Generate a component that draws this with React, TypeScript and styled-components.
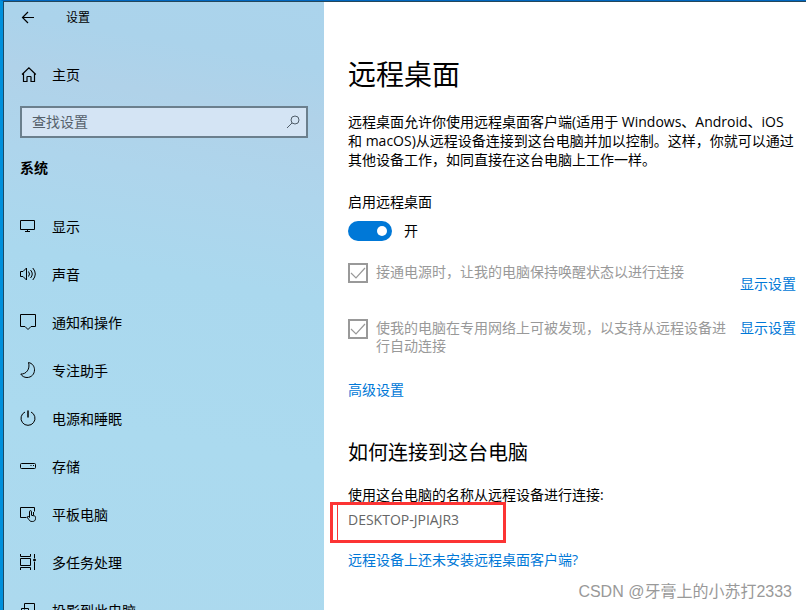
import React from "react";
import styled, { createGlobalStyle } from "styled-components";

const GlobalStyle = createGlobalStyle`
  * { box-sizing: border-box; }
  body {
    margin: 0;
    overflow: hidden;
    background: #fff;
    color: #000;
    font-family: "Open Sans", "Noto Sans CJK SC", sans-serif;
    font-size: 14px;
    line-height: 20px;
  }
  h1, h2, p { margin: 0; font-weight: 400; }
  a { color: #0078d7; text-decoration: none; }
`;

const Window = styled.div`
  display: grid;
  grid-template-columns: 321px 1fr;
  height: 100vh;
  overflow: hidden;
  border-left: 3px solid #0090dc;
  border-top: 1px solid #0067c0;
`;

const Sidebar = styled.aside`
  min-width: 0;
  overflow: hidden;
  padding: 0 16px;
  border-left: 1px solid #1c4a66;
  border-top: 1px solid #24475c;
  background: linear-gradient(190deg, #abd4ec 0%, #abd3eb 10%, #b0d2e9 18%, #aed5ec 30%, #aad8ee 45%, #abdaef 70%, #acd9ee 100%);
`;

const TitleBar = styled.header`
  display: flex;
  align-items: center;
  gap: 28px;
  height: 32px;
  font-size: 12px;
`;

const IconButton = styled.button`
  display: flex;
  padding: 0;
  border: 0;
  background: none;
  color: inherit;
`;

const NavLink = styled.a`
  display: flex;
  align-items: center;
  gap: 14px;
  height: 48px;
  color: #000;
  white-space: nowrap;
`;

const HomeLink = styled(NavLink)`
  margin-top: 17px;
`;

const Search = styled.form`
  display: flex;
  align-items: center;
  height: 32px;
  margin-top: 7px;
  padding: 0 4px 0 10px;
  border: 2px solid #6b7f8d;
  background: #d4e4f4;
  color: #4f5c68;
`;

const SearchInput = styled.input`
  flex: 1;
  min-width: 0;
  padding: 0;
  border: 0;
  outline: 0;
  background: none;
  font: inherit;
  &::placeholder { color: #55606b; opacity: 1; }
`;

const GroupTitle = styled.h2`
  margin: 20px 0 25px;
  font-size: 14px;
  font-weight: 700;
`;

const Icon = styled.svg`
  flex: none;
  width: 18px;
  height: 18px;
  fill: none;
  stroke: currentColor;
  stroke-width: 1;
`;

const Main = styled.main`
  display: flex;
  flex-direction: column;
  align-items: flex-start;
  min-width: 0;
  padding: 54px 10px 0 24px;
  border-top: 1px solid #24475c;
`;

const PageTitle = styled.h1`
  font-size: 28px;
  line-height: 36px;
`;

const Intro = styled.p`
  margin-top: 20px;
  line-height: 19px;
`;

const Label = styled.label`
  margin-top: 23px;
`;

const SwitchRow = styled.div`
  display: flex;
  align-items: center;
  gap: 12px;
  margin-top: 9px;
`;

const Switch = styled.input`
  appearance: none;
  display: flex;
  align-items: center;
  width: 44px;
  height: 20px;
  margin: 0;
  padding: 0 5px;
  border-radius: 10px;
  background: #0078d7;
  &::before {
    content: "";
    width: 10px;
    height: 10px;
    border-radius: 50%;
    background: #fff;
  }
  &:checked { justify-content: flex-end; }
`;

const Options = styled.div`
  align-self: stretch;
  display: grid;
  gap: 26px;
  margin-top: 22px;
`;

const Option = styled.div`
  display: grid;
  grid-template-columns: 20px 1fr 56px;
  column-gap: 8px;
  align-items: start;
`;

const CheckBox = styled.input`
  appearance: none;
  width: 20px;
  height: 20px;
  margin: 0;
  border: 2px solid #999;
  &:checked {
    background: url("data:image/svg+xml,%3Csvg xmlns='http://www.w3.org/2000/svg' viewBox='0 0 16 16'%3E%3Cpath d='M1 8l5 5L15 3' fill='none' stroke='%23999' stroke-width='1.2'/%3E%3C/svg%3E") center / 16px 16px no-repeat;
  }
`;

const OptionLabel = styled.label`
  color: #999;
  line-height: 18px;
`;

const OptionLink = styled.a<{ $low?: boolean }>`
  margin-top: ${(p) => (p.$low ? "12px" : "0")};
  line-height: 18px;
  white-space: nowrap;
`;

const AdvancedLink = styled.a`
  margin-top: 25px;
`;

const SectionTitle = styled.h2`
  margin-top: 39px;
  font-size: 20px;
  line-height: 28px;
`;

const Hint = styled.p`
  margin-top: 18px;
`;

const NameBox = styled.div`
  position: relative;
  margin-top: 5px;
  color: #666;
`;

const Highlight = styled.span`
  position: absolute;
  left: -18px;
  top: -8px;
  width: 176px;
  height: 41px;
  border: 3px solid #fc3434;
  &::before {
    content: "";
    position: absolute;
    left: 4px;
    top: 0;
    bottom: 0;
    border-left: 1px solid #fc3434;
  }
`;

const ClientLink = styled.a`
  margin-top: 20px;
`;

const Watermark = styled.footer`
  align-self: flex-end;
  margin: 12px 4px 0 0;
  color: #999;
  font-family: "Liberation Sans", "Noto Sans CJK SC", sans-serif;
  font-size: 16px;
  white-space: nowrap;
`;

const navItems = [
  { label: "显示", icon: <path d="M.5 3.5h14v9H.5zM7.5 12.5v2M5 14.5h5" /> },
  {
    label: "声音",
    icon: <path d="M.5 6.5H3L6.500 3v12L3 11.500H.5zM8.500 6.500q2 2.500 0 5M10.500 5q3.500 4 0 8M12.800 3q5 6 0 12" />,
  },
  { label: "通知和操作", icon: <path d="M.5 1.5h15v12H11l-3 3-3-3H.5z" /> },
  {
    label: "专注助手",
    icon: <path d="M8.5 1.500c4 .8 6 4 6 7.300 0 4.500-3.200 7.700-7.500 7.700-2.800 0-5-1.300-6.200-3.500C6 13.500 10.500 8 8.500 1.500z" />,
  },
  {
    label: "电源和睡眠",
    icon: (
      <>
        <path d="M5 3A7 7 0 1 0 11 3" />
        <path d="M8 1.5v7" strokeWidth="1.5" />
      </>
    ),
  },
  {
    label: "存储",
    icon: (
      <>
        <rect x=".5" y="6.5" width="15" height="5" rx="1" />
        <path d="M10.500 8.500h1M13 8.500h1" />
      </>
    ),
  },
  {
    label: "平板电脑",
    icon: (
      <>
        <path d="M6.500 12.500h-6v-10h14v4" />
        <path d="M9.500 12.500V6.800q0-1.200 1-1.200t1 1.200v3.500l3 .6q1 .3 1 1.400v1.200c0 2-1.200 3-3.200 3-1.800 0-2.600-.5-3.500-2L7.500 12.800q-.6-1.300.4-1.500.9 0 1.600 1.200zM13.500 10V7" />
      </>
    ),
  },
  {
    label: "多任务处理",
    icon: (
      <>
        <path d="M.5 1v2.500h10V1M.5 5.500h10v7H.5zM.5 17v-2.500h10V17M14.500 1v4M14.500 9v8" />
        <circle cx="14.5" cy="7" r="1" fill="currentColor" />
      </>
    ),
  },
  { label: "投影到此电脑", icon: <path d="M4.500 8.500v-6h10v9h-6M1.500 7.500h7v8h-7z" /> },
];

export default function App() {
  return (
    <>
      <GlobalStyle />
      <Window>
        <Sidebar>
          <TitleBar>
            <IconButton type="button" aria-label="返回">
              <Icon viewBox="0 0 18 18">
                <path d="M14 8.500H2.500M8 3L2.500 8.500 8 14" strokeWidth="1.2" />
              </Icon>
            </IconButton>
            <span>设置</span>
          </TitleBar>
          <HomeLink href="#home">
            <Icon viewBox="0 0 18 18">
              <path d="M2 8.500L8.900 1.800l6.900 6.700M3.500 7.500v8H7V11q0-.5.5-.5h3q.5 0 .5.5v4.500h3.500v-8" strokeWidth="1.2" />
            </Icon>
            主页
          </HomeLink>
          <Search>
            <SearchInput aria-label="查找设置" placeholder="查找设置" />
            <Icon viewBox="0 0 18 18">
              <circle cx="11" cy="7" r="4" />
              <path d="M8 10L3 15" />
            </Icon>
          </Search>
          <GroupTitle>系统</GroupTitle>
          <nav>
            {navItems.map((item) => (
              <NavLink key={item.label} href="#settings">
                <Icon viewBox="0 1 18 18">{item.icon}</Icon>
                {item.label}
              </NavLink>
            ))}
          </nav>
        </Sidebar>
        <Main>
          <PageTitle>远程桌面</PageTitle>
          <Intro>
            远程桌面允许你使用远程桌面客户端(适用于 Windows、Android、iOS 和
            macOS)从远程设备连接到这台电脑并加以控制。这样，你就可以通过其他设备工作，如同直接在这台电脑上工作一样。
          </Intro>
          <Label htmlFor="remote">启用远程桌面</Label>
          <SwitchRow>
            <Switch id="remote" type="checkbox" role="switch" defaultChecked />
            <span>开</span>
          </SwitchRow>
          <Options>
            <Option>
              <CheckBox id="awake" type="checkbox" defaultChecked disabled />
              <OptionLabel htmlFor="awake">接通电源时，让我的电脑保持唤醒状态以进行连接</OptionLabel>
              <OptionLink href="#power" $low>显示设置</OptionLink>
            </Option>
            <Option>
              <CheckBox id="discover" type="checkbox" defaultChecked disabled />
              <OptionLabel htmlFor="discover">使我的电脑在专用网络上可被发现，以支持从远程设备进行自动连接</OptionLabel>
              <OptionLink href="#network">显示设置</OptionLink>
            </Option>
          </Options>
          <AdvancedLink href="#advanced">高级设置</AdvancedLink>
          <SectionTitle>如何连接到这台电脑</SectionTitle>
          <Hint>使用这台电脑的名称从远程设备进行连接:</Hint>
          <NameBox>
            DESKTOP-JPIAJR3
            <Highlight />
          </NameBox>
          <ClientLink href="#client">远程设备上还未安装远程桌面客户端?</ClientLink>
          <Watermark>CSDN @牙膏上的小苏打2333</Watermark>
        </Main>
      </Window>
    </>
  );
}
